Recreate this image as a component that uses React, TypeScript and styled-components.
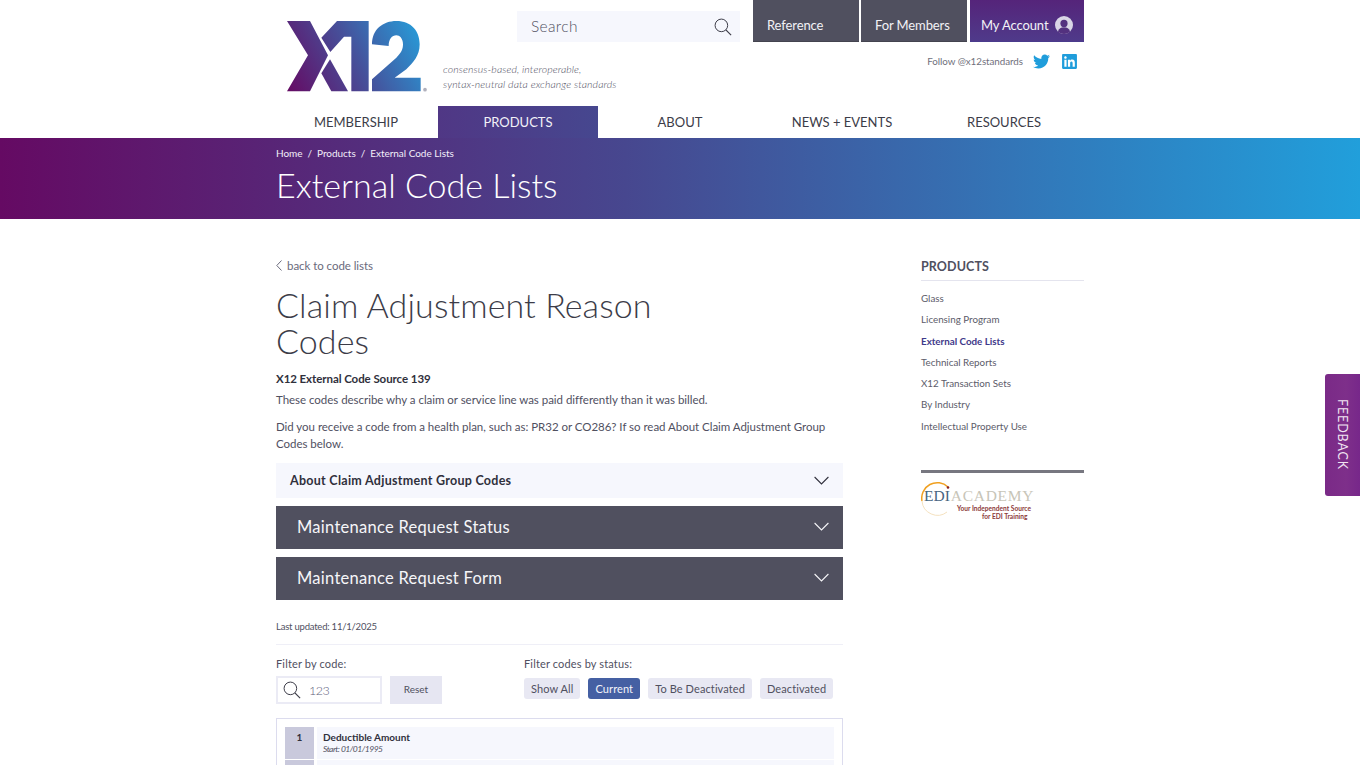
import React from 'react';
import styled, { createGlobalStyle } from 'styled-components';
import { FaTwitter, FaLinkedin } from 'react-icons/fa';

const GlobalStyle = createGlobalStyle`
  html, body {
    margin: 0;
    padding: 0;
    height: 765px;
    overflow: hidden;
    background: #fff;
  }
  body {
    font-family: Lato, "Liberation Sans", sans-serif;
    color: #50505f;
  }
  * { box-sizing: border-box; }
`;

const Page = styled.div`
  position: relative;
  width: 1360px;
  height: 765px;
  overflow: hidden;
`;

const Wrap = styled.div`
  width: 808px;
  margin: 0 auto;
`;

const HeaderTop = styled.div`
  display: grid;
  grid-template-columns: 167px 74px 223px 1fr;
  grid-template-rows: 42px 64px;
  height: 106px;
`;

const LogoBox = styled.a`
  grid-column: 1;
  grid-row: 1 / span 2;
  padding: 21px 0 0 11px;
  display: block;
`;

const SearchBox = styled.div`
  grid-column: 3;
  grid-row: 1;
  margin-top: 11px;
  height: 31px;
  background: #f6f7fd;
  display: flex;
  align-items: center;
  justify-content: space-between;
  padding: 0 8px 0 14px;
  font-size: 15.5px;
  letter-spacing: 0.35px;
  font-weight: 300;
  color: #50505f;
`;

const SearchLabel = styled.span`
  margin-top: -2px;
`;

const TopButtons = styled.div`
  grid-column: 4;
  grid-row: 1;
  display: flex;
  justify-content: flex-end;
  gap: 2px;
`;

const TopButton = styled.a<{ $account?: boolean; $w: number }>`
  width: ${p => p.$w}px;
  height: 42px;
  padding: 8px 0 0 ${p => (p.$account ? 11 : 14)}px;
  display: flex;
  align-items: center;
  gap: 7px;
  font-size: 13px;
  letter-spacing: -0.1px;
  color: #f2f2f6;
  background: ${p => (p.$account ? 'linear-gradient(180deg, #55247a, #4f3a8a)' : '#50505f')};
  border-bottom: 1px solid ${p => (p.$account ? '#4a3b8c' : '#44444f')};
  margin-left: ${p => (p.$account ? 1 : 0)}px;
`;

const Tagline = styled.div`
  grid-column: 2 / span 2;
  grid-row: 2;
  padding-top: 20px;
  font-size: 10.5px;
  line-height: 15px;
  font-style: italic;
  font-weight: 300;
  letter-spacing: 0.1px;
  color: #50505f;
  white-space: nowrap;
`;

const FollowRow = styled.div`
  grid-column: 4;
  grid-row: 2;
  display: flex;
  justify-content: flex-end;
  align-items: flex-start;
  padding: 11px 6px 0 0;
  font-size: 9.8px;
  letter-spacing: -0.05px;
  color: #70707c;
`;

const FollowText = styled.span`
  line-height: 17px;
`;

const SocialLink = styled.a<{ $c: string; $ml: number }>`
  display: flex;
  color: ${p => p.$c};
  margin-left: ${p => p.$ml}px;
`;

const Nav = styled.nav`
  display: flex;
  margin: 0 -1px;
  height: 32px;
`;

const NavItem = styled.a<{ $active?: boolean }>`
  flex: 0 0 162px;
  height: 32px;
  display: flex;
  align-items: center;
  justify-content: center;
  font-size: 13px;
  color: ${p => (p.$active ? '#f2f2f8' : '#3c3c48')};
  background: ${p => (p.$active ? 'linear-gradient(90deg, #503785, #46478f)' : 'transparent')};
  ${p => (p.$active ? 'flex-basis: 160px; margin: 0 1px;' : '')}
`;

const Hero = styled.div`
  height: 81px;
  background: linear-gradient(90deg, #650a63 0%, #47478f 46%, #219fdb 100%);
  color: #fff;
`;

const Crumbs = styled.div`
  display: flex;
  gap: 5px;
  padding-top: 9px;
  font-size: 10px;
  line-height: 13px;
  letter-spacing: -0.03px;
  color: #f3effa;
`;

const HeroTitle = styled.h1`
  margin: 5px 0 0;
  font-size: 34px;
  line-height: 40px;
  font-weight: 300;
  letter-spacing: 0;
`;

const Main = styled(Wrap)`
  display: grid;
  grid-template-columns: 567px 163px;
  justify-content: space-between;
  padding-top: 39px;
`;

const BackLink = styled.a`
  display: flex;
  align-items: center;
  gap: 5px;
  height: 14px;
  font-size: 11.5px;
  letter-spacing: -0.05px;
  color: #6a6a7c;
`;

const PageTitle = styled.h2`
  margin: 15px 0 0;
  max-width: 400px;
  font-size: 34px;
  line-height: 36px;
  font-weight: 300;
  letter-spacing: 0.1px;
  color: #3c3c48;
`;

const Strong = styled.p`
  margin: 12px 0 0;
  font-size: 11.5px;
  line-height: 16px;
  font-weight: 700;
  letter-spacing: -0.07px;
  color: #30303c;
`;

const Para = styled.p<{ $mt: number }>`
  margin: ${p => p.$mt}px 0 0;
  font-size: 11.5px;
  line-height: 17px;
  letter-spacing: -0.03px;
  color: #50505f;
`;

const Accordion = styled.div<{ $dark?: boolean }>`
  height: ${p => (p.$dark ? 43 : 35)}px;
  margin-top: ${p => (p.$dark ? 8 : 11)}px;
  display: flex;
  align-items: center;
  justify-content: space-between;
  padding: 0 14px ${p => (p.$dark ? 2 : 0)}px ${p => (p.$dark ? 21 : 14)}px;
  background: ${p => (p.$dark ? '#50505f' : '#f6f7fd')};
  color: ${p => (p.$dark ? '#f6f6f9' : '#30303c')};
  font-size: ${p => (p.$dark ? 16.5 : 12.5)}px;
  font-weight: ${p => (p.$dark ? 400 : 700)};
  letter-spacing: ${p => (p.$dark ? 0.27 : 0.28)}px;
`;

const Updated = styled.div`
  margin-top: 21px;
  padding-bottom: 11px;
  font-size: 9.5px;
  line-height: 12px;
  letter-spacing: -0.22px;
  border-bottom: 1px solid #efeff7;
  color: #50505f;
`;

const Filters = styled.div`
  display: grid;
  grid-template-columns: 248px 1fr;
  padding-top: 12px;
`;

const FilterLabel = styled.div`
  height: 19px;
  font-size: 11px;
  line-height: 14px;
  letter-spacing: 0.15px;
`;

const FilterRow = styled.div`
  display: flex;
  gap: 8px;
`;

const CodeInput = styled.div`
  width: 106px;
  height: 28px;
  border: 2px solid #ebebf5;
  display: flex;
  align-items: center;
  gap: 8px;
  padding-left: 5px;
  font-size: 12.5px;
  font-weight: 300;
  letter-spacing: -0.5px;
  color: #60607a;
`;

const ResetButton = styled.button`
  width: 52px;
  height: 28px;
  border: 0;
  padding: 0 0 2px;
  background: #e6e6f2;
  font: inherit;
  font-size: 10px;
  color: #50505f;
`;

const Pill = styled.button<{ $active?: boolean }>`
  height: 21px;
  margin-top: 2px;
  padding: 0 7px 1px;
  border: 0;
  border-radius: 3px;
  font-family: inherit;
  font-size: 11px;
  letter-spacing: 0.1px;
  color: ${p => (p.$active ? '#f4f4fa' : '#50505f')};
  background: ${p => (p.$active ? '#4560a3' : '#e8e8f3')};
`;

const CodeList = styled.div`
  margin-top: 14px;
  border: 1px solid #dcdcee;
  padding: 8px;
  display: flex;
  flex-direction: column;
  gap: 1px;
`;

const CodeRow = styled.div`
  display: flex;
  gap: 3px;
  height: 32px;
`;

const CodeNumber = styled.div`
  flex: 0 0 29px;
  background: #c9c9dc;
  text-align: center;
  padding-top: 4px;
  font-size: 10px;
  line-height: 12px;
  font-weight: 700;
  color: #30303c;
`;

const CodeBody = styled.div`
  flex: 1;
  background: #f6f7fd;
  padding: 4px 6px;
`;

const CodeName = styled.div`
  font-size: 10px;
  line-height: 12px;
  font-weight: 700;
  color: #30303c;
`;

const CodeDate = styled.div`
  font-size: 8.5px;
  line-height: 12px;
  font-style: italic;
  letter-spacing: -0.5px;
  color: #50505f;
`;

const SideTitle = styled.div`
  height: 21px;
  margin-top: 2px;
  font-size: 12.5px;
  line-height: 14px;
  font-weight: 700;
  letter-spacing: 0.1px;
  color: #50505f;
  border-bottom: 1px solid #e4e4ee;
`;

const SideList = styled.ul`
  list-style: none;
  margin: 7px 0 0;
  padding: 0;
`;

const SideItem = styled.li<{ $active?: boolean }>`
  height: 21.3px;
  font-size: 9.8px;
  line-height: 21px;
  font-weight: ${p => (p.$active ? 700 : 400)};
  color: ${p => (p.$active ? '#3f3a8a' : '#5c5c6a')};
`;

const Promo = styled.div`
  margin-top: 33px;
  border-top: 3px solid #777780;
  padding-top: 6px;
`;

const PromoLogo = styled.div`
  position: relative;
  width: 113px;
  height: 42px;
`;

const EdiWord = styled.div`
  display: flex;
  padding: 9px 0 0 3px;
  font-family: "Liberation Serif", serif;
  font-size: 15.5px;
  line-height: 16px;
  white-space: nowrap;
`;

const EdiPart = styled.span`
  color: #47657f;
`;

const AcademyPart = styled.span`
  color: #c8c5b8;
  letter-spacing: 0.7px;
  margin-left: 1px;
`;

const EdiLine = styled.div<{ $pl: number }>`
  padding-left: ${p => p.$pl}px;
  font-size: 6.6px;
  line-height: 8px;
  font-weight: 700;
  color: #8c3a3a;
  white-space: nowrap;
`;

const EdiSwoosh = styled.svg`
  position: absolute;
  left: 0;
  top: 0;
`;

const Feedback = styled.a`
  position: absolute;
  right: 0;
  top: 374px;
  width: 35px;
  height: 122px;
  border-radius: 3px 0 0 3px;
  background: linear-gradient(90deg, #7a2a87, #7e2f8a 60%, #77278a);
  display: flex;
  align-items: center;
  justify-content: center;
  color: #f0e4f2;
  font-size: 12.5px;
  letter-spacing: 0.9px;
  writing-mode: vertical-rl;
`;

const SearchIcon = ({ size }: { size: number }) => (
  <svg width={size} height={size} viewBox="0 0 20 20" fill="none" stroke="#3c3c48" strokeWidth="1.1">
    <circle cx="8.2" cy="8.2" r="7" />
    <path d="M13.2 13.2L19 19" strokeWidth="1.3" />
  </svg>
);

const Chevron = () => (
  <svg width="15" height="9" viewBox="0 0 15 9" fill="none" stroke="currentColor" strokeWidth="1.1">
    <path d="M.6 1l6.900 7 6.900-7" />
  </svg>
);

const UserIcon = () => (
  <svg width="18" height="18" viewBox="0 0 18 18">
    <circle cx="9" cy="9" r="9" fill="#d9d6e6" />
    <circle cx="9" cy="7.4" r="3.6" fill="#53317f" />
    <path d="M2.9 15.5c1-3 3-4.2 6.100-4.200s5.100 1.200 6.100 4.200c-1.500 1.600-3.700 2.500-6.100 2.500s-4.600-.9-6.100-2.500z" fill="#53317f" />
  </svg>
);

const Logo = () => (
  <svg width="142" height="74" viewBox="17 15 426 222">
    <defs>
      <linearGradient id="x12grad" gradientUnits="userSpaceOnUse" x1="17" y1="226" x2="420" y2="15">
        <stop offset="0" stopColor="#650a63" />
        <stop offset="0.5" stopColor="#46509a" />
        <stop offset="1" stopColor="#25a0dc" />
      </linearGradient>
    </defs>
    <g fill="url(#x12grad)">
      <path d="M17 15H86L140 118 86 226H17L80 118z" />
      <path d="M120 65L167 15H262V226H210V62H188L147 108z" />
      <path d="M120 172L146 130 200 226H150z" />
      <path d="M272 85C272 40 305 15 345 15C390 15 415 45 415 85C415 120 395 140 375 160L340 185H418V226H272V190L345 125C360 110 365 100 365 85C365 68 355 58 345 58C332 58 322 70 322 90z" />
    </g>
    <circle cx="431" cy="221" r="5.500" fill="#b0b0bc" />
  </svg>
);

const navItems = ['MEMBERSHIP', 'PRODUCTS', 'ABOUT', 'NEWS + EVENTS', 'RESOURCES'];
const sideItems = ['Glass', 'Licensing Program', 'External Code Lists', 'Technical Reports', 'X12 Transaction Sets', 'By Industry', 'Intellectual Property Use'];

export default function App() {
  return (
    <Page>
      <GlobalStyle />
      <Wrap>
        <HeaderTop>
          <LogoBox><Logo /></LogoBox>
          <SearchBox>
            <SearchLabel>Search</SearchLabel>
            <SearchIcon size={18} />
          </SearchBox>
          <TopButtons>
            <TopButton $w={106}>Reference</TopButton>
            <TopButton $w={106}>For Members</TopButton>
            <TopButton $w={114} $account>My Account <UserIcon /></TopButton>
          </TopButtons>
          <Tagline>
            consensus-based, interoperable,<br />
            syntax-neutral data exchange standards
          </Tagline>
          <FollowRow>
            <FollowText>Follow @x12standards</FollowText>
            <SocialLink $c="#1f9ddb" $ml={10}><FaTwitter size={17} /></SocialLink>
            <SocialLink $c="#1f9ddb" $ml={11}><FaLinkedin size={17} /></SocialLink>
          </FollowRow>
        </HeaderTop>
        <Nav>
          {navItems.map(n => (
            <NavItem key={n} $active={n === 'PRODUCTS'}>{n}</NavItem>
          ))}
        </Nav>
      </Wrap>
      <Hero>
        <Wrap>
          <Crumbs>
            <span>Home</span><span>/</span><span>Products</span><span>/</span><span>External Code Lists</span>
          </Crumbs>
          <HeroTitle>External Code Lists</HeroTitle>
        </Wrap>
      </Hero>
      <Main>
        <div>
          <BackLink>
            <svg width="6" height="11" viewBox="0 0 6 11" fill="none" stroke="#6a6a7c" strokeWidth="1">
              <path d="M5.500 .5L.8 5.500l4.700 5" />
            </svg>
            back to code lists
          </BackLink>
          <PageTitle>Claim Adjustment Reason Codes</PageTitle>
          <Strong>X12 External Code Source 139</Strong>
          <Para $mt={4}>These codes describe why a claim or service line was paid differently than it was billed.</Para>
          <Para $mt={10}>Did you receive a code from a health plan, such as: PR32 or CO286? If so read About Claim Adjustment Group Codes below.</Para>
          <Accordion>About Claim Adjustment Group Codes <Chevron /></Accordion>
          <Accordion $dark>Maintenance Request Status <Chevron /></Accordion>
          <Accordion $dark>Maintenance Request Form <Chevron /></Accordion>
          <Updated>Last updated: 11/1/2025</Updated>
          <Filters>
            <div>
              <FilterLabel>Filter by code:</FilterLabel>
              <FilterRow>
                <CodeInput><SearchIcon size={18} />123</CodeInput>
                <ResetButton>Reset</ResetButton>
              </FilterRow>
            </div>
            <div>
              <FilterLabel>Filter codes by status:</FilterLabel>
              <FilterRow>
                <Pill>Show All</Pill>
                <Pill $active>Current</Pill>
                <Pill>To Be Deactivated</Pill>
                <Pill>Deactivated</Pill>
              </FilterRow>
            </div>
          </Filters>
          <CodeList>
            <CodeRow>
              <CodeNumber>1</CodeNumber>
              <CodeBody>
                <CodeName>Deductible Amount</CodeName>
                <CodeDate>Start: 01/01/1995</CodeDate>
              </CodeBody>
            </CodeRow>
            <CodeRow>
              <CodeNumber />
              <CodeBody />
            </CodeRow>
          </CodeList>
        </div>
        <aside>
          <SideTitle>PRODUCTS</SideTitle>
          <SideList>
            {sideItems.map(s => (
              <SideItem key={s} $active={s === 'External Code Lists'}>{s}</SideItem>
            ))}
          </SideList>
          <Promo>
            <PromoLogo>
              <EdiSwoosh width="36" height="40" viewBox="0 0 36 40" fill="none">
                <path d="M27 8A15.500 15.500 0 0 0 1 22" stroke="#f0a020" strokeWidth="1.500" />
                <path d="M1 22A15.500 15.500 0 0 0 26 33" stroke="#f5e2c0" strokeWidth="1" />
                <circle cx="27" cy="8.500" r="1.300" fill="#8c2020" />
              </EdiSwoosh>
              <EdiWord><EdiPart>EDI</EdiPart><AcademyPart>ACADEMY</AcademyPart></EdiWord>
              <EdiLine $pl={36}>Your Independent Source</EdiLine>
              <EdiLine $pl={61}>for EDI Training</EdiLine>
            </PromoLogo>
          </Promo>
        </aside>
      </Main>
      <Feedback>FEEDBACK</Feedback>
    </Page>
  );
}
